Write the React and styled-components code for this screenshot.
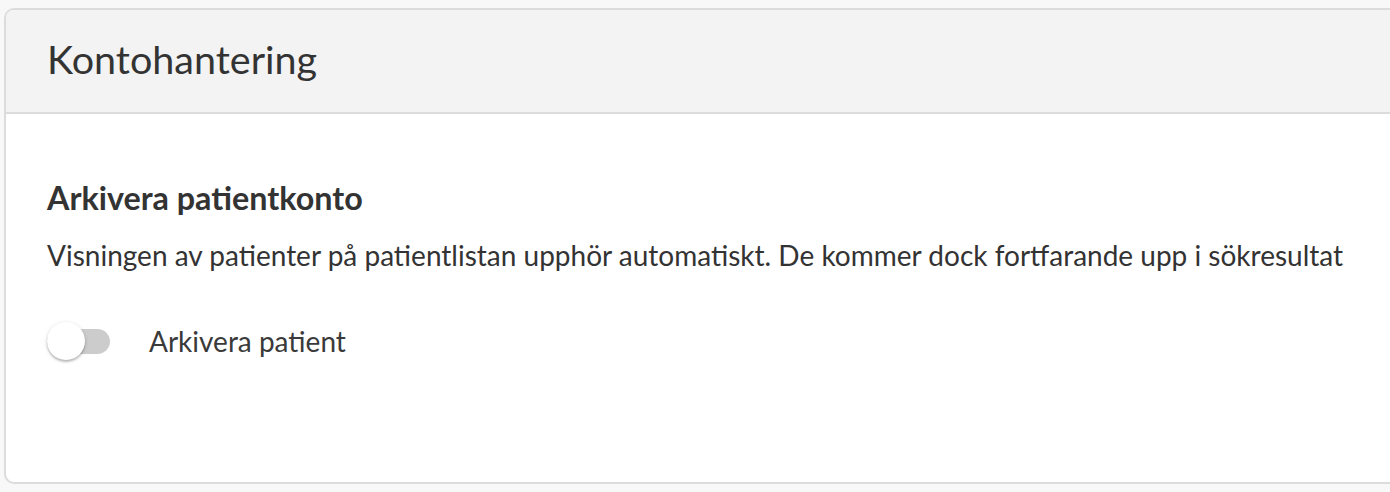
import React, { useState } from "react";
import styled, { createGlobalStyle } from "styled-components";

const Global = createGlobalStyle`
  html, body { margin: 0; padding: 0; background: #f8f8f8; }
  body { font-family: Lato, "Open Sans", sans-serif; color: #333; }
`;

const Page = styled.div`
  padding: 8px 0 0 4px;
  height: 492px;
  box-sizing: border-box;
  overflow: hidden;
`;

const Card = styled.section`
  background: #fff;
  border: 2px solid #dcdcdc;
  border-right: none;
  border-radius: 10px 0 0 10px;
  overflow: hidden;
`;

const Header = styled.header`
  background: #f3f3f3;
  border-bottom: 2px solid #dcdcdc;
  height: 104px;
  box-sizing: border-box;
  display: flex;
  align-items: center;
  padding: 0 41px 4px;
`;

const Title = styled.h1`
  margin: 0;
  font-weight: 400;
  font-size: 39.5px;
  line-height: 48px;
  color: #333;
`;

const Body = styled.div`
  padding: 65px 41px 123px;
`;

const SectionTitle = styled.h2`
  margin: 0;
  font-size: 32.3px;
  line-height: 38px;
  font-weight: 700;
  color: #333;
`;

const Description = styled.p`
  margin: 21px 0 0;
  font-size: 28px;
  line-height: 34px;
  color: #333;
`;

const ToggleRow = styled.label`
  display: flex;
  align-items: center;
  gap: 39px;
  margin-top: 51px;
  height: 36px;
  cursor: pointer;
`;

const Track = styled.span`
  position: relative;
  display: inline-block;
  width: 63px;
  height: 25px;
  border-radius: 13px;
  background: ${(p) => (p.$on ? "#9fd3c7" : "#cccccc")};
  flex-shrink: 0;
`;

const Knob = styled.span`
  position: absolute;
  top: 50%;
  left: ${(p) => (p.$on ? "26px" : "0")};
  width: 38px;
  height: 38px;
  border-radius: 50%;
  background: #fff;
  transform: translateY(-50%);
  box-shadow: 0 2px 2px rgba(0, 0, 0, 0.2), 0 1px 4px rgba(0, 0, 0, 0.14);
  transition: left 0.15s;
`;

const ToggleLabel = styled.span`
  font-size: 28px;
  line-height: 34px;
  color: #3a3a3a;
`;

export default function App() {
  const [on, setOn] = useState(false);
  return (
    <>
      <Global />
      <Page>
        <Card>
          <Header>
            <Title>Kontohantering</Title>
          </Header>
          <Body>
            <SectionTitle>Arkivera patientkonto</SectionTitle>
            <Description>
              Visningen av patienter på patientlistan upphör automatiskt. De kommer dock fortfarande upp i sökresultat
            </Description>
            <ToggleRow onClick={() => setOn(!on)}>
              <Track $on={on}>
                <Knob $on={on} />
              </Track>
              <ToggleLabel>Arkivera patient</ToggleLabel>
            </ToggleRow>
          </Body>
        </Card>
      </Page>
    </>
  );
}
